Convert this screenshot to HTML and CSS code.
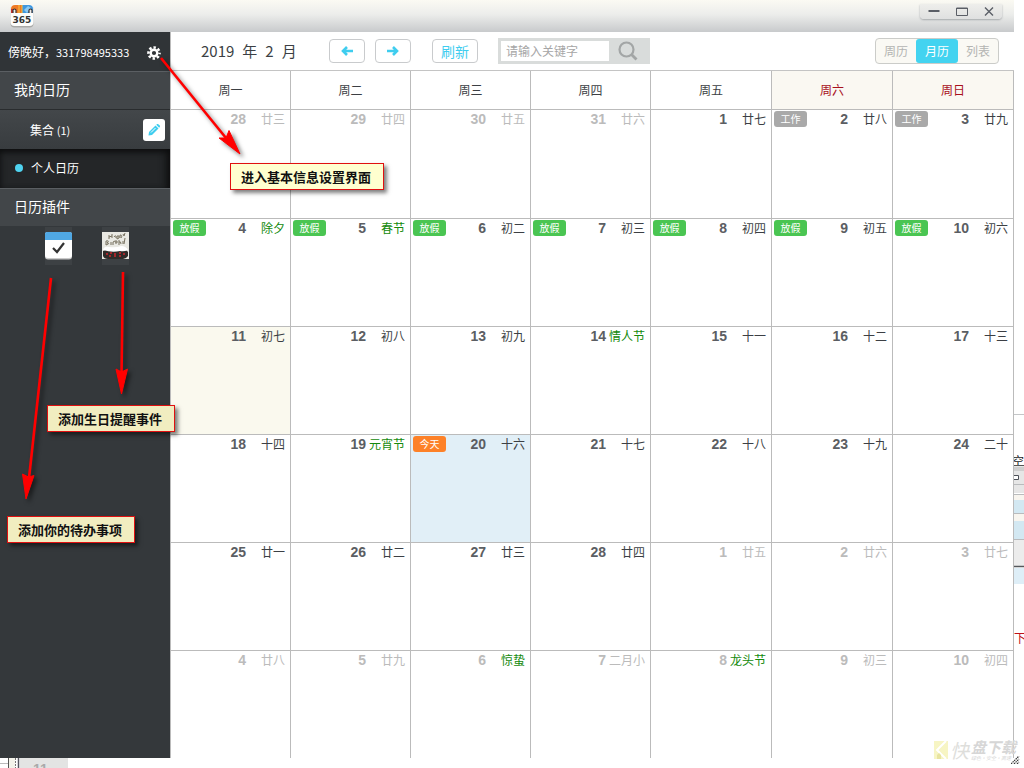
FILE: index.html
```html
<!DOCTYPE html>
<html lang="zh-CN">
<head>
<meta charset="utf-8">
<title>365日历</title>
<link rel="stylesheet" href="styles.css">
</head>
<body>
<div class="desktop">
<div class="window">
  <header class="titlebar">
    <svg class="logo" width="24" height="24" viewBox="0 0 24 24" aria-hidden="true">
      <rect x="0.500" y="1" width="23" height="22.500" rx="4" fill="#a9a9a7"/>
      <rect x="0.500" y="0.500" width="23" height="21.500" rx="4" fill="#fdfdfb"/>
      <path d="M1 9V5q0-4 4-4h7v8z" fill="#ee7a25"/>
      <path d="M12 9V1h7q4 0 4 4v4z" fill="#3f97df"/>
      <path d="M1 5h5v4H1z" fill="#c9302c"/><path d="M9 1v8M12 1v8" stroke="#f9c242"/>
      <path d="M14 6l4-4 3 2-4 5z" fill="#8bc9f4"/>
      <path d="M3 9V6q1.500-2 3 0v3M19 9V6q1.500-2 3 0v3" fill="#eee" stroke="#3c3431" stroke-width="1.200"/>
      <text x="12" y="18.500" text-anchor="middle" class="logo-text">365</text>
    </svg>
    <div class="window-controls">
      <button type="button" aria-label="最小化"><svg width="12" height="9" viewBox="0 0 12 9"><path d="M0.500 4h11" stroke="#5a5e66" stroke-width="2"/></svg></button>
      <button type="button" aria-label="最大化"><svg width="12" height="9" viewBox="0 0 12 9"><path d="M0.500 1h11v7.500h-11zM0.500 1.500h11" fill="none" stroke="#5a5e66"/></svg></button>
      <button type="button" aria-label="关闭"><svg width="10" height="9" viewBox="0 0 10 9"><path d="M1 0.500l8 8M9 0.500l-8 8" stroke="#5a5e66" stroke-width="1.400"/></svg></button>
    </div>
  </header>
  <div class="body">
    <aside class="sidebar">
      <div class="user">
        <span>傍晚好，<span class="user-id">331798495333</span></span>
        <button type="button" class="gear" aria-label="设置"><svg width="14" height="14" viewBox="0 0 14 14"><circle cx="7" cy="7" r="5.500" fill="none" stroke="#fff" stroke-width="2.600" stroke-dasharray="2.400 1.920" stroke-dashoffset="1.200"/><circle cx="7" cy="7" r="3.300" fill="none" stroke="#fff" stroke-width="2.400"/></svg></button>
      </div>
      <h2 class="group">我的日历</h2>
      <div class="collection">
        <span>集合 <span class="latin">(1)</span></span>
        <button type="button" class="edit" aria-label="编辑"><svg width="14" height="14" viewBox="0 0 14 14"><path d="M2 9l6.500-6.500 3 3L5 12l-3.500.5z" fill="#3fcdef"/><path d="M9.300 1.800l.8-.7q.7-.4 1.300.1l1.400 1.400q.5.600 0 1.300l-.7.800z" fill="#3fcdef"/><path d="M4 9.500l4.500-4.500" stroke="#fff"/></svg></button>
      </div>
      <a class="personal" href="#"><span class="dot"></span>个人日历</a>
      <h2 class="group plugins">日历插件</h2>
      <div class="plugin-list">
        <button type="button" aria-label="待办事项"><svg width="27" height="28" viewBox="0 0 27 28"><rect y="1" width="27" height="26.500" rx="3" fill="#c9c9c9"/><rect width="27" height="26" rx="3" fill="#fff"/><path d="M0 8V2q0-2 2-2h23q2 0 2 2v6z" fill="#50a8e4"/><path d="M8 16l4 4 7-9" fill="none" stroke="#333" stroke-width="2.200"/></svg></button>
        <button type="button" aria-label="生日提醒"><svg width="27" height="28" viewBox="0 0 27 28"><path d="M0 0h27v27H0z" fill="#e9e9e3"/><g fill="none" stroke="#77715f"><path d="M7 3v4M10 2v4M7 5l3-1M12 5q2-3 2 1M15 7V4q3-1 2 2l-2 1M18 6V3q3 0 1 3M21 2l1 2 1-3M4 13V9q4-1 1 2 4 0-1 2M9 10v3M11 13v-3l2-1M14 8v4M13 10h3M17 8v5M17 10q2-1 2 2M21 9v3M23 6l-1 6"/></g><path d="M1 19q4-2 8-1 5 1 10-1 5 0 7 3v4q-2 3-5 3H6q-4 0-5-3z" fill="#302c29"/><path d="M1 18q1-4 6-3 7 1 12-1 5 0 7 4-4 2-8 1-8 2-17-1z" fill="#fff"/><path d="M4 22h2m2-1h2m2 1h2m3-1h2m2 1h2M7 24h2m3 0h2m3 0h2" stroke="#d0262c" stroke-width="1.500"/></svg></button>
      </div>
    </aside>
    <main class="main">
      <div class="toolbar">
        <h1><span>2019</span><span>年</span><span>2</span><span>月</span></h1>
        <div class="pager">
          <button type="button" class="btn" aria-label="上个月"><svg width="12" height="10" viewBox="0 0 12 10"><path d="M12 5H2M6 1L2 5l4 4" fill="none" stroke="#3fcdef" stroke-width="2.600"/></svg></button>
          <button type="button" class="btn" aria-label="下个月"><svg width="12" height="10" viewBox="0 0 12 10"><path d="M0 5h10M6 1l4 4-4 4" fill="none" stroke="#3fcdef" stroke-width="2.600"/></svg></button>
        </div>
        <button type="button" class="btn refresh">刷新</button>
        <form class="search">
          <input type="text" aria-label="关键字" placeholder="请输入关键字">
          <button type="button" aria-label="搜索"><svg width="20" height="20" viewBox="0 0 20 20"><circle cx="8.500" cy="8.500" r="7" fill="none" stroke="#a3a6a6" stroke-width="2.200"/><path d="M13.500 13.500l5 5" stroke="#a3a6a6" stroke-width="2.800"/></svg></button>
        </form>
        <div class="views">
          <button type="button">周历</button>
          <button type="button" class="active">月历</button>
          <button type="button">列表</button>
        </div>
      </div>
      <table class="month">
        <colgroup><col class="weekday" span="4"><col span="3"></colgroup>
        <thead>
          <tr><th>周一</th><th>周二</th><th>周三</th><th>周四</th><th>周五</th><th class="weekend">周六</th><th class="weekend">周日</th></tr>
        </thead>
        <tbody>
          <tr>
            <td class="other"><div class="day"><b>28</b><span>廿三</span></div></td>
            <td class="other"><div class="day"><b>29</b><span>廿四</span></div></td>
            <td class="other"><div class="day"><b>30</b><span>廿五</span></div></td>
            <td class="other"><div class="day"><b>31</b><span>廿六</span></div></td>
            <td><div class="day"><b>1</b><span>廿七</span></div></td>
            <td><div class="day"><i class="tag work">工作</i><b>2</b><span>廿八</span></div></td>
            <td><div class="day"><i class="tag work">工作</i><b>3</b><span>廿九</span></div></td>
          </tr>
          <tr>
            <td><div class="day"><i class="tag rest">放假</i><b>4</b><span class="fest">除夕</span></div></td>
            <td><div class="day"><i class="tag rest">放假</i><b>5</b><span class="fest">春节</span></div></td>
            <td><div class="day"><i class="tag rest">放假</i><b>6</b><span>初二</span></div></td>
            <td><div class="day"><i class="tag rest">放假</i><b>7</b><span>初三</span></div></td>
            <td><div class="day"><i class="tag rest">放假</i><b>8</b><span>初四</span></div></td>
            <td><div class="day"><i class="tag rest">放假</i><b>9</b><span>初五</span></div></td>
            <td><div class="day"><i class="tag rest">放假</i><b>10</b><span>初六</span></div></td>
          </tr>
          <tr>
            <td class="hover"><div class="day"><b>11</b><span>初七</span></div></td>
            <td><div class="day"><b>12</b><span>初八</span></div></td>
            <td><div class="day"><b>13</b><span>初九</span></div></td>
            <td><div class="day"><b>14</b><span class="fest">情人节</span></div></td>
            <td><div class="day"><b>15</b><span>十一</span></div></td>
            <td><div class="day"><b>16</b><span>十二</span></div></td>
            <td><div class="day"><b>17</b><span>十三</span></div></td>
          </tr>
          <tr>
            <td><div class="day"><b>18</b><span>十四</span></div></td>
            <td><div class="day"><b>19</b><span class="fest">元宵节</span></div></td>
            <td class="today"><div class="day"><i class="tag now">今天</i><b>20</b><span>十六</span></div></td>
            <td><div class="day"><b>21</b><span>十七</span></div></td>
            <td><div class="day"><b>22</b><span>十八</span></div></td>
            <td><div class="day"><b>23</b><span>十九</span></div></td>
            <td><div class="day"><b>24</b><span>二十</span></div></td>
          </tr>
          <tr>
            <td><div class="day"><b>25</b><span>廿一</span></div></td>
            <td><div class="day"><b>26</b><span>廿二</span></div></td>
            <td><div class="day"><b>27</b><span>廿三</span></div></td>
            <td><div class="day"><b>28</b><span>廿四</span></div></td>
            <td class="other"><div class="day"><b>1</b><span>廿五</span></div></td>
            <td class="other"><div class="day"><b>2</b><span>廿六</span></div></td>
            <td class="other"><div class="day"><b>3</b><span>廿七</span></div></td>
          </tr>
          <tr>
            <td class="other"><div class="day"><b>4</b><span>廿八</span></div></td>
            <td class="other"><div class="day"><b>5</b><span>廿九</span></div></td>
            <td class="other"><div class="day"><b>6</b><span class="fest">惊蛰</span></div></td>
            <td class="other"><div class="day"><b>7</b><span>二月小</span></div></td>
            <td class="other"><div class="day"><b>8</b><span class="fest">龙头节</span></div></td>
            <td class="other"><div class="day"><b>9</b><span>初三</span></div></td>
            <td class="other"><div class="day"><b>10</b><span>初四</span></div></td>
          </tr>
        </tbody>
      </table>
    </main>
  </div>
</div>

<svg class="behind-right" width="10" height="240" viewBox="0 0 10 240" aria-hidden="true">
  <path d="M0 4.500h10" stroke="#c4c6c8"/>
  <text x="-2" y="56" class="behind-text">空</text>
  <path d="M0 55.500h10" stroke="#555"/>
  <path d="M0 56h10v27H0z" fill="#e6e6e6"/><path d="M0 57h10v4H0z" fill="#cfcfcf"/>
  <path d="M-1 65.500h5.500v4H-1" fill="#fff" stroke="#4c5058"/>
  <path d="M0 74.500h10M0 84.500h10M0 103.500h10M0 129.500h10" stroke="#b9bbbd"/>
  <path d="M0 85h10v5H0zM0 104h10v7H0z" fill="#f8f5ef"/>
  <path d="M0 90h10v13H0zM0 111h10v18H0z" fill="#d3e8f2"/>
  <path d="M0 130h10v26H0z" fill="#ececec"/>
  <path d="M0 156.500h10" stroke="#55585c" stroke-width="1.500"/>
  <path d="M0 158h10v16H0z" fill="#deeef7"/>
  <text x="0" y="233" class="behind-text red">下</text>
</svg>
<svg class="behind-bottom" width="68" height="10" viewBox="0 0 68 10" aria-hidden="true">
  <path d="M0 5.500h8" stroke="#bbb"/><path d="M8.500 0v10" stroke="#555"/>
  <path d="M9 0h6v10H9z" fill="#f3f3ea"/><path d="M15.500 0v10" stroke="#777" stroke-dasharray="2 1"/>
  <path d="M18.500 0v10" stroke="#55555f" stroke-width="1.500"/><path d="M20 0h48v10H20z" fill="#e3e4e3"/>
  <text x="33" y="16" class="behind-num">11</text>
</svg>
<div class="watermark">
  <svg width="14" height="18" viewBox="0 0 14 18" aria-hidden="true"><path d="M0 0h14v18H0z" fill="#f7f5c4"/><path d="M12 0L3 9l9 9" fill="none" stroke="#fff" stroke-width="2"/><path d="M3 18v-4l2-2 2 2v4" fill="#e8e4a0"/></svg>
  <span class="wm-first">快</span>
  <span class="wm-rest"><span class="wm-name">盘下载</span><span class="wm-slogan">绿色·安全·高速</span></span>
</div>
<svg class="grip" width="9" height="8" viewBox="0 0 9 8" aria-hidden="true"><path d="M0 8l8-8M3 8l5-5M6 8l2-2" stroke="#333" stroke-width="1.200" stroke-dasharray="1.500 .7"/></svg>

<svg class="arrows" width="250" height="510" viewBox="0 0 250 510" aria-hidden="true">
  <g fill="#f00" stroke="#f00">
    <path d="M161 58L226 138" stroke-width="2.600"/><path d="M240 154L219 138l7 0 3-7.500z"/>
    <path d="M51 278L29 478" stroke-width="2.600"/><path d="M26 499L22.500 474l6 3 5.500-1.500z"/>
    <path d="M123 272L121.500 374" stroke-width="2.600"/><path d="M121.500 394L116 369l5.500 3 6-3z"/>
  </g>
</svg>
<div class="callout settings">进入基本信息设置界面</div>
<div class="callout dim birthday">添加生日提醒事件</div>
<div class="callout dim todo">添加你的待办事项</div>
</div>
</body>
</html>
```

FILE: styles.css
```css
* { box-sizing: border-box; }
body {
  margin: 0;
  background: #fff;
  font: 12px/18px "Noto Sans CJK SC", sans-serif;
  color: #3c3f44;
}
button, input { font: inherit; color: inherit; margin: 0; padding: 0; border: 0; background: none; }
button { cursor: pointer; }
svg { display: block; flex: none; }
h1, h2 { margin: 0; font-weight: 400; }

.desktop { position: relative; min-height: 100vh; padding: 0 10px 10px 0; display: flex; }
.window { flex: 1; display: flex; flex-direction: column; }

.titlebar {
  height: 32px;
  padding: 4px 12px 0 10px;
  display: flex;
  justify-content: space-between;
  background: linear-gradient(#fbfaf3, #ecedeb 45%, #c8cacc);
}
.logo-text { font: bold 9px "DejaVu Sans", sans-serif; fill: #333; }
.window-controls {
  height: 15px;
  width: 82px;
  padding: 0 8px;
  display: flex;
  align-items: center;
  justify-content: space-between;
  border-radius: 0 0 4px 4px;
  background: linear-gradient(#eeeeeb, #dfe0e0);
  box-shadow: 0 1px 2px #a5a8aa;
}

.body { flex: 1; display: flex; }
.sidebar { width: 170px; flex: none; background: #34383b; color: #fff; }
.user {
  height: 39px;
  padding: 0 9px 0 8px;
  display: flex;
  align-items: center;
  justify-content: space-between;
  background: #303437;
}
.gear { padding-top: 2px; }
.user-id, .latin { font-size: 11px; }
.group {
  height: 38px;
  padding-left: 14px;
  border-top: 1px solid #5b5f63;
  background: #424649;
  font-size: 14px;
  line-height: 35px;
}
.collection {
  height: 40px;
  padding: 0 5px 0 30px;
  display: flex;
  align-items: center;
  justify-content: space-between;
  border-top: 1px solid #292c2e;
  background: linear-gradient(#43474a, #383c3f);
}
.edit {
  width: 22px;
  height: 22px;
  display: grid;
  place-items: center;
  border-radius: 3px;
  background: #fff;
}
.personal {
  height: 39px;
  padding: 0 0 2px 15px;
  display: flex;
  align-items: center;
  gap: 8px;
  background: #242628;
  box-shadow: inset 0 3px 6px #0c0d0e, inset -8px 0 8px -5px #111;
  color: #fff;
  text-decoration: none;
}
.dot { width: 8px; height: 8px; border-radius: 50%; background: #4fd3f0; }
.plugin-list { padding: 1px 0 0 45px; display: flex; gap: 30px; }
.plugin-list button { padding: 5px 0; background: #3d4144; }

.main { flex: 1; border-left: 1px solid #bbb; }
.toolbar {
  height: 39px;
  padding: 0 15px 0 30px;
  display: flex;
  align-items: center;
  border-bottom: 1px solid #c4c4c4;
}
h1 { width: 98px; margin-right: 30px; display: flex; gap: 8px; font-size: 15px; line-height: 24px; }
.pager { display: flex; gap: 10px; margin-right: 21px; }
.btn {
  width: 36px;
  height: 24px;
  display: grid;
  place-items: center;
  border: 1px solid #c9cbcd;
  border-radius: 4px;
  background: #fff;
}
.refresh { width: 46px; margin-right: 20px; color: #3fcdef; font-size: 14px; }
.search { width: 152px; height: 26px; display: flex; background: #d9dcdb; padding: 3px; }
.search input { width: 108px; padding-left: 5px; background: #fff; }
.search input::placeholder { color: #a6a6a6; opacity: 1; }
.search button { flex: 1; display: grid; place-items: center; }
.views {
  height: 26px;
  margin-left: auto;
  display: flex;
  border: 1px solid #cbccc9;
  border-radius: 4px;
  background: #faf9f4;
  color: #b3b4b2;
}
.views button { width: 40px; }
.views .active { width: 42px; border-radius: 3px; background: #43d3f0; color: #fff; }

.month { width: 100%; table-layout: fixed; border-collapse: separate; border-spacing: 0; }
.weekday { width: 14.24%; }
th { height: 39px; padding: 0; border: solid #bbb; border-width: 0 1px 1px 0; font-weight: 400; }
.weekend { background: #faf8f2; color: #a8101c; }
td { height: 108px; padding: 0; vertical-align: top; border: solid #bbb; border-width: 0 1px 1px 0; }
tbody tr:first-child td { height: 109px; }
tbody tr:last-child td { height: 107px; border-bottom: 0; }
.day { padding: 0 5px 0 2px; display: flex; align-items: center; }
.day b {
  margin-left: auto;
  font: bold 14px/18px "Liberation Sans", sans-serif;
  color: #5b5e63;
}
.day span { width: 39px; text-align: right; white-space: nowrap; }
.other .day, .other .day b { color: #bbb; }
.day .fest, .other .day .fest { color: #148a0c; }
.hover { background: #faf9ee; }
.today { background: #e1eff7; }
.tag {
  width: 33px;
  height: 16px;
  border-radius: 3px;
  color: #fff;
  font-size: 10px;
  font-style: normal;
  line-height: 16px;
  text-align: center;
}
.work { background: #a9a9a9; }
.rest { background: #4ac552; }
.now { background: #fd8128; }

.arrows { position: absolute; left: 0; top: 0; pointer-events: none; filter: drop-shadow(3px 3px 2px rgba(0, 0, 0, .5)); }
.callout {
  position: absolute;
  padding: 0 12px 0 10px;
  border: 1px solid #e01010;
  background: #ffffcf;
  box-shadow: 3px 3px 4px rgba(0, 0, 0, .5);
  color: #111;
  font-size: 13px;
  font-weight: 700;
  line-height: 25px;
  white-space: nowrap;
}
.dim { background: #f1edc0; }
.settings { left: 230px; top: 163px; }
.birthday { left: 47px; top: 405px; }
.todo { left: 7px; top: 516px; }

.behind-right { position: absolute; right: 0; top: 410px; }
.behind-bottom { position: absolute; left: 0; bottom: 0; }
.behind-text { font-size: 12px; fill: #222; }
.red { fill: #c01018; }
.behind-num { font: bold 14px "Liberation Sans", sans-serif; fill: #aaa; }
.watermark {
  position: absolute;
  right: 8px;
  bottom: 7px;
  display: flex;
  align-items: center;
  gap: 2px;
  color: #d6d6d6;
  font-style: italic;
}
.wm-first { color: #dededb; font-size: 19px; line-height: 20px; }
.wm-rest { display: flex; flex-direction: column; }
.wm-name { font-size: 15px; font-weight: 700; line-height: 16px; }
.wm-slogan { font-size: 5px; line-height: 6px; }
.grip { position: absolute; right: 4px; bottom: 4px; }
```
